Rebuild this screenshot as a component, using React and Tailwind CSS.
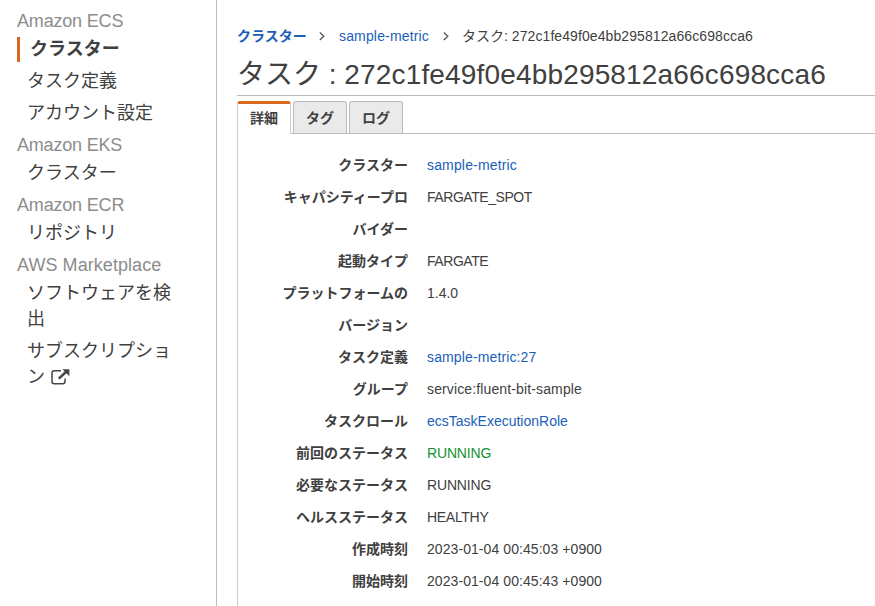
const navGroups = [
  {
    title: 'Amazon ECS',
    tracking: 'tracking-[-0.18px]',
    items: [
      { lines: ['クラスター'], active: true },
      { lines: ['タスク定義'] },
      { lines: ['アカウント設定'] },
    ],
  },
  { title: 'Amazon EKS', tracking: 'tracking-[-0.2px]', items: [{ lines: ['クラスター'] }] },
  { title: 'Amazon ECR', tracking: 'tracking-[-0.18px]', items: [{ lines: ['リポジトリ'] }] },
  {
    title: 'AWS Marketplace',
    tracking: 'tracking-[0.06px]',
    items: [
      { lines: ['ソフトウェアを検', '出'] },
      { lines: ['サブスクリプショ', 'ン'], external: true },
    ],
  },
];

const link = 'text-[#1a5fb8]';

const details = [
  { label: ['クラスター'], value: 'sample-metric', style: 'text-[#1a5fb8] tracking-[0.16px]' },
  { label: ['キャパシティープロ', 'バイダー'], value: 'FARGATE_SPOT', style: 'tracking-[-0.45px]' },
  { label: ['起動タイプ'], value: 'FARGATE', style: 'tracking-[-0.45px]' },
  { label: ['プラットフォームの', 'バージョン'], value: '1.4.0' },
  { label: ['タスク定義'], value: 'sample-metric:27', style: 'text-[#1a5fb8] tracking-[0.13px]' },
  { label: ['グループ'], value: 'service:fluent-bit-sample', style: 'tracking-[0.13px]' },
  { label: ['タスクロール'], value: 'ecsTaskExecutionRole', style: link },
  { label: ['前回のステータス'], value: 'RUNNING', style: 'text-[#12922f] tracking-[-0.16px]' },
  { label: ['必要なステータス'], value: 'RUNNING', style: 'tracking-[-0.16px]' },
  { label: ['ヘルスステータス'], value: 'HEALTHY', style: 'tracking-[-0.3px]' },
  { label: ['作成時刻'], value: '2023-01-04 00:45:03 +0900', style: 'tracking-[0.07px]' },
  { label: ['開始時刻'], value: '2023-01-04 00:45:43 +0900', style: 'tracking-[0.07px]' },
];

function ExternalIcon() {
  return (
    <svg className="ml-[6px] h-[16px] w-[19px]" viewBox="0 0 19 16" fill="none" stroke="#444" strokeWidth="1.5">
      <path d="M10 1.8H3.2Q1 1.8 1 4V12.6Q1 14.8 3.2 14.8H11.8Q14 14.8 14 12.6V9.5" />
      <path d="M7.8 9.6L15.2 2.8" strokeWidth="2.6" />
      <path d="M11.4 0.2H18.4V7.2Z" fill="#444" stroke="none" />
    </svg>
  );
}

function Chevron() {
  return (
    <svg className="h-[10px] w-[6px] shrink-0" viewBox="0 0 6 10" fill="none" stroke="#555" strokeWidth="1.3">
      <path d="M0.8 1.6L4.8 5.3L0.8 9" />
    </svg>
  );
}

function Sidebar() {
  return (
    <nav className="w-[217px] shrink-0 border-r border-[#bbb] pt-[8px] pl-[17px] text-[18px] leading-[26px]">
      {navGroups.map((group) => (
        <section key={group.title}>
          <h2 className={`mb-[2px] text-[#8c8c8c] ${group.tracking}`}>{group.title}</h2>
          <ul>
            {group.items.map((item) => (
              <li
                key={item.lines[0]}
                className={
                  item.active
                    ? 'mt-[3px] mb-[6px] h-[25px] border-l-[3px] border-[#d9681d] pl-[10px] leading-[25px] font-bold'
                    : 'mb-[6px] pl-[10px]'
                }
              >
                {item.lines.map((line, i) => (
                  <div key={line} className="flex items-center whitespace-nowrap">
                    {line}
                    {item.external && i === item.lines.length - 1 && <ExternalIcon />}
                  </div>
                ))}
              </li>
            ))}
          </ul>
        </section>
      ))}
    </nav>
  );
}

export default function App() {
  return (
    <div className="flex h-[606px] w-[875px] overflow-hidden bg-white font-['Liberation_Sans','Noto_Sans_CJK_JP',sans-serif] text-[#404040]">
      <Sidebar />
      <main className="flex min-w-0 flex-1 flex-col pl-[20px] text-[14px]">
        <div className="mt-[26px] flex h-[20px] items-center leading-[20px] whitespace-nowrap">
          <a className={`w-[82px] font-bold ${link}`}>クラスター</a>
          <Chevron />
          <a className={`ml-[14px] w-[104px] tracking-[0.16px] ${link}`}>sample-metric</a>
          <Chevron />
          <span className="ml-[13px]">
            タスク: <span className="tracking-[0.09px]">272c1fe49f0e4bb295812a66c698cca6</span>
          </span>
        </div>
        <h1 className="flex h-[50px] items-center border-b border-[#bbb] pt-[8px] text-[28px] leading-[36px] whitespace-pre">
          タスク : <span className="tracking-[0.16px]">272c1fe49f0e4bb295812a66c698cca6</span>
        </h1>
        <div className="mt-[5px] flex h-[33px] items-end gap-[2px] border-b border-[#bbb] text-center font-bold">
          <div className="-mb-px h-[33px] w-[54px] rounded-t-[3px] border-x border-t-[3px] border-x-[#ccc] border-t-[#d9681d] bg-white leading-[29px]">
            詳細
          </div>
          <div className="h-[32px] w-[54px] rounded-t-[3px] border border-b-0 border-[#bbb] bg-[#eaeaea] leading-[32px]">タグ</div>
          <div className="h-[32px] w-[54px] rounded-t-[3px] border border-b-0 border-[#bbb] bg-[#eaeaea] leading-[32px]">ログ</div>
        </div>
        <dl className="flex-1 border-l border-[#ccc] pt-[15px] leading-[32px]">
          {details.map((row) => (
            <div key={row.label[0]} className="flex whitespace-nowrap">
              <dt className="w-[170px] text-right font-bold">
                {row.label.map((line) => (
                  <div key={line}>{line}</div>
                ))}
              </dt>
              <dd className={`ml-[19px] ${row.style || ''}`}>{row.value}</dd>
            </div>
          ))}
        </dl>
      </main>
    </div>
  );
}
